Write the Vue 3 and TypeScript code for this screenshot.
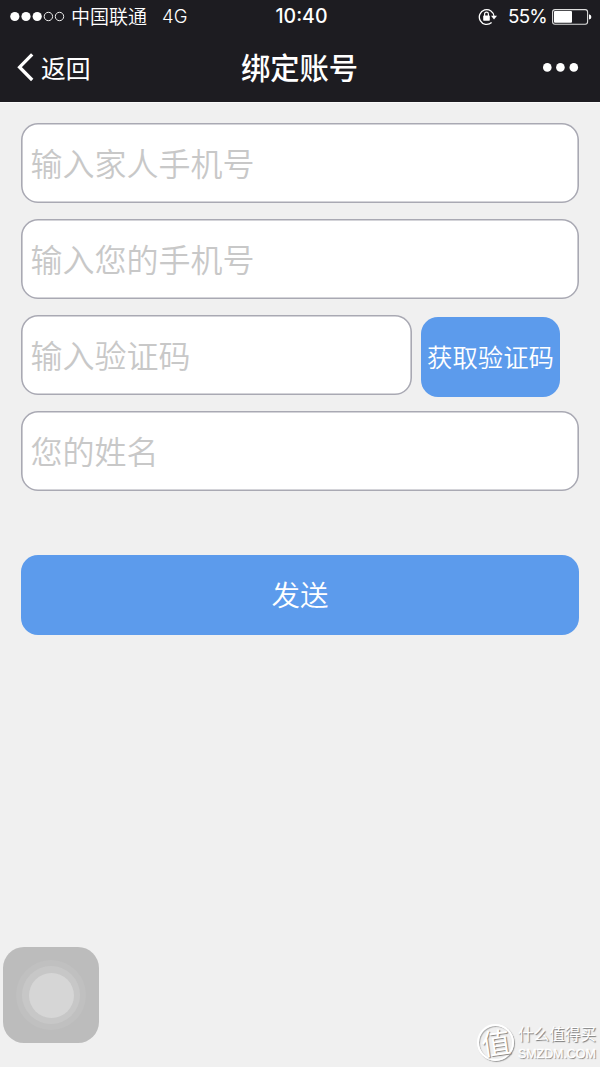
<script setup lang="ts">
import { ref } from 'vue'

interface Field {
  key: string
  placeholder: string
  withCode?: boolean
}

const fields: Field[] = [
  { key: 'family', placeholder: '输入家人手机号' },
  { key: 'phone', placeholder: '输入您的手机号' },
  { key: 'code', placeholder: '输入验证码', withCode: true },
  { key: 'name', placeholder: '您的姓名' },
]

const values = ref<Record<string, string>>({ family: '', phone: '', code: '', name: '' })
</script>

<template>
  <div class="screen">
    <header class="top">
      <div class="status">
        <div class="status-left">
          <svg class="signal" width="56" height="12" viewBox="0 0 56 12">
            <g fill="#fff">
              <circle cx="4.8" cy="5.5" r="4.6" />
              <circle cx="16" cy="5.5" r="4.6" />
              <circle cx="27.2" cy="5.5" r="4.6" />
            </g>
            <g fill="none" stroke="#eee" stroke-width="1">
              <circle cx="38.4" cy="5.5" r="4.2" />
              <circle cx="49.5" cy="5.5" r="4.2" />
            </g>
          </svg>
          <span class="carrier">中国联通</span>
          <span class="network">4G</span>
        </div>
        <span class="time">10:40</span>
        <div class="status-right">
          <svg class="lock" width="20" height="18" viewBox="0 0 20 18">
            <path d="M13.6 14.6A7.4 7.4 0 1 1 16.1 8.5" fill="none" stroke="#fff" stroke-width="1.3" />
            <path d="M13 7.8h6l-3 3.6z" fill="#fff" />
            <rect x="5.2" y="7.5" width="6.6" height="5.2" rx=".6" fill="#fff" />
            <path d="M6.6 8V6a1.9 1.9 0 0 1 3.8 0V8" fill="none" stroke="#fff" stroke-width="1.2" />
          </svg>
          <span class="percent">55%</span>
          <svg class="battery" width="40" height="16" viewBox="0 0 40 16">
            <rect x=".6" y=".6" width="35" height="14.6" rx="2.4" fill="none" stroke="#ddd" stroke-width="1.1" />
            <rect x="2" y="2" width="18" height="11.8" rx="1" fill="#fff" />
            <path d="M37 5.2q2.4.5 2.4 2.7T37 10.6z" fill="#fff" />
          </svg>
        </div>
      </div>
      <nav class="nav">
        <div class="back">
          <svg width="18" height="30" viewBox="0 0 18 30">
            <path d="M16.2 2.4L3.6 15.2L16.2 28" fill="none" stroke="#fff" stroke-width="3.3" />
          </svg>
          <span class="back-label">返回</span>
        </div>
        <h1 class="title">绑定账号</h1>
        <svg class="more" width="36" height="10" viewBox="0 0 36 10" fill="#fff">
          <circle cx="4.3" cy="4.4" r="4.3" />
          <circle cx="17.4" cy="4.4" r="4.3" />
          <circle cx="30.8" cy="4.4" r="4.3" />
        </svg>
      </nav>
    </header>

    <form class="form" @submit.prevent>
      <div v-for="field in fields" :key="field.key" class="row">
        <input
          v-model="values[field.key]"
          class="field"
          :class="{ short: field.withCode }"
          type="text"
          :placeholder="field.placeholder"
        />
        <button v-if="field.withCode" class="get-code" type="button">获取验证码</button>
      </div>
      <button class="send" type="submit">发送</button>
    </form>

    <div class="assistive">
      <div class="ring outer"><div class="ring middle"><div class="ring inner"></div></div></div>
    </div>

    <div class="watermark">
      <div class="seal"><span class="seal-char">值</span></div>
      <div class="mark-text">
        <span class="mark-name">什么值得买</span>
        <span class="mark-site">SMZDM.COM</span>
      </div>
    </div>
  </div>
</template>

<style>
body {
  margin: 0;
  background: #f0f0f0;
}
</style>

<style scoped>
.screen {
  position: relative;
  width: 600px;
  height: 1067px;
  overflow: hidden;
  background: #f0f0f0;
  font-family: "Noto Sans CJK SC", sans-serif;
}

.top {
  box-sizing: border-box;
  height: 103px;
  border-bottom: 1px solid #fafafa;
  background: #1d1c21;
  color: #fff;
}

.status {
  display: grid;
  grid-template-columns: 1fr auto 1fr;
  align-items: center;
  height: 33px;
  padding: 0 8px 0 10px;
}

.status-left,
.status-right {
  display: flex;
  align-items: center;
  line-height: 33px;
}

.status-right {
  justify-content: flex-end;
}

.carrier {
  margin-left: 5px;
  padding-bottom: 1px;
  font-size: 19px;
  font-weight: 350;
  line-height: 32px;
}

.network {
  margin-left: 15px;
  font: 300 18.5px/33px Inter, sans-serif;
}

.time {
  padding-left: 1px;
  font: 500 19.5px/33px Inter, sans-serif;
}

.percent {
  margin: 0 5px 0 10px;
  font: 400 18.8px/33px Inter, sans-serif;
  letter-spacing: -0.8px;
}

.nav {
  display: grid;
  grid-template-columns: 1fr auto 1fr;
  align-items: center;
  height: 67px;
  padding: 0 21px 0 16px;
}

.back {
  display: flex;
  align-items: center;
}

.back-label {
  margin-left: 7px;
  font-size: 24.8px;
  font-weight: 400;
  line-height: 36px;
}

.title {
  margin: 0;
  padding: 0 0 2px 4px;
  font-size: 29.3px;
  font-weight: 500;
  line-height: 44px;
}

.more {
  justify-self: end;
  margin-top: 2px;
}

.form {
  display: flex;
  flex-direction: column;
  gap: 16px;
  padding: 20px 21px 0;
}

.row {
  display: flex;
  gap: 9px;
  height: 80px;
}

.field {
  box-sizing: border-box;
  width: 558px;
  height: 80px;
  padding: 0 9.5px 2px;
  border: 0;
  border-radius: 17px;
  outline: none;
  background: #fff;
  box-shadow: inset 0 0 0 1.6px #a9a9b3;
  color: #333;
  font-family: inherit;
  font-size: 32px;
  font-weight: 350;
}

.field.short {
  width: 391px;
}

.field::placeholder {
  color: #c8c8c8;
  opacity: 1;
}

.get-code,
.send {
  padding: 0 0 2px;
  border: 0;
  border-radius: 17px;
  background: #5c9bec;
  color: #fff;
  font-family: inherit;
  font-weight: 350;
}

.get-code {
  width: 139px;
  height: 80px;
  margin-top: 2px;
  font-size: 25.4px;
  white-space: nowrap;
}

.send {
  height: 80px;
  margin-top: 48px;
  padding-bottom: 3px;
  font-size: 28.5px;
}

.assistive {
  position: absolute;
  left: 3px;
  top: 947px;
  display: grid;
  place-items: center;
  width: 96px;
  height: 96px;
  border-radius: 21px;
  background: #bcbcbc;
}

.ring {
  display: grid;
  place-items: center;
  border-radius: 50%;
}

.outer {
  width: 70px;
  height: 70px;
  background: #c0c0c0;
}

.middle {
  width: 58px;
  height: 58px;
  background: #c7c7c7;
}

.inner {
  width: 45px;
  height: 45px;
  background: #d6d6d6;
}

.watermark {
  position: absolute;
  left: 477px;
  top: 1022px;
  display: flex;
  align-items: center;
}

.seal {
  display: flex;
  align-items: center;
  justify-content: center;
  box-sizing: border-box;
  width: 37px;
  height: 37px;
  border: 2px solid #fff;
  border-radius: 50%;
  box-shadow: 1px 1px 1px #999, inset 1px 1px 1px #aaa;
}

.seal-char {
  margin-top: -4px;
  color: #fff;
  font-size: 29px;
  line-height: 34px;
  text-shadow: 1px 1px 1px #777;
  transform: rotate(-8deg);
}

.mark-text {
  display: flex;
  flex-direction: column;
  margin-left: 4px;
  color: #fff;
  text-shadow: 1px 1px 1px #777;
}

.mark-name {
  font-size: 15.6px;
  line-height: 23px;
  white-space: nowrap;
}

.mark-site {
  padding-top: 1px;
  font: 400 12.4px/17px "Liberation Sans", sans-serif;
  -webkit-text-stroke: 0.4px #fff;
}
</style>
